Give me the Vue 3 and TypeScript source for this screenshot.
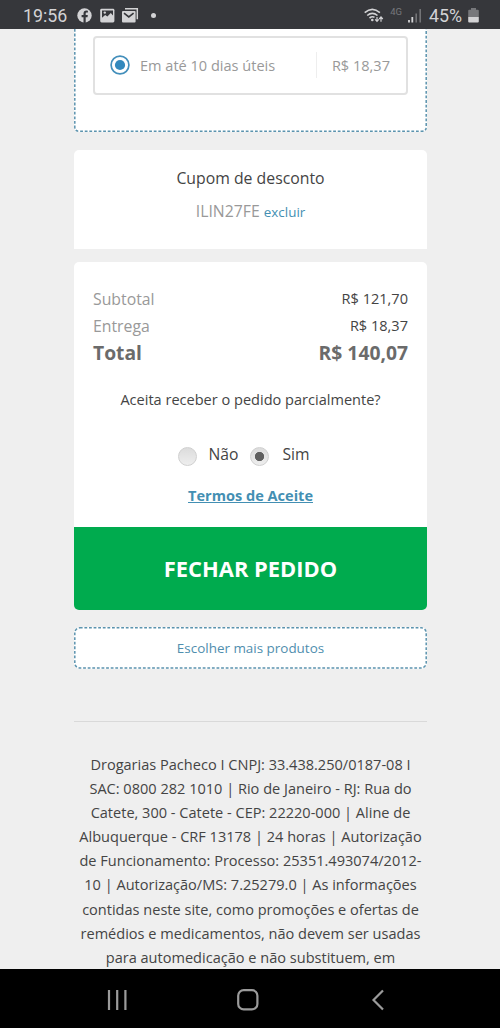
<script setup lang="ts">
interface Row { label: string; value: string; total?: boolean }

const rows: Row[] = [
  { label: 'Subtotal', value: 'R$ 121,70' },
  { label: 'Entrega', value: 'R$ 18,37' },
  { label: 'Total', value: 'R$ 140,07', total: true },
]

const legal: string[] = [
  'Drogarias Pacheco I CNPJ: 33.438.250/0187-08 I',
  'SAC: 0800 282 1010 | Rio de Janeiro - RJ: Rua do',
  'Catete, 300 - Catete - CEP: 22220-000 | Aline de',
  'Albuquerque - CRF 13178 | 24 horas | Autorização',
  'de Funcionamento: Processo: 25351.493074/2012-',
  '10 | Autorização/MS: 7.25279.0 | As informações',
  'contidas neste site, como promoções e ofertas de',
  'remédios e medicamentos, não devem ser usadas',
  'para automedicação e não substituem, em',
]
</script>

<template>
  <div class="phone">
    <header class="status">
      <span class="clock">19:56</span>
      <svg class="fb" width="15" height="15" viewBox="0 0 15 15">
        <circle cx="7.5" cy="7.5" r="7.2" fill="#d3d3d5" />
        <path d="M6.5 15V9.3H4.6V7.1h1.9V5.6c0-2 1.1-3 2.9-3l1.5.1v1.9H9.8c-.8 0-1.1.4-1.1 1v1.5h2.1l-.3 2.2H8.7V15z" fill="#36373b" />
      </svg>
      <svg class="photo" width="15" height="15" viewBox="0 0 15 15">
        <rect x="0.2" y="0.8" width="14.2" height="13.6" rx="1.4" fill="#d3d3d5" />
        <path d="M2 2.6v7.2l3.2-2.9 2.2 1.6 3.4-3.6L13 7.6V2.6z" fill="#36373b" />
        <circle cx="4.8" cy="4.6" r="1.2" fill="#d3d3d5" />
      </svg>
      <svg class="mail" width="17" height="15" viewBox="0 0 17 15">
        <path d="M3 0.8h12.3v10.5" fill="none" stroke="#d3d3d5" stroke-width="1.5" />
        <rect x="0" y="3" width="13.6" height="11.4" rx="1" fill="#d3d3d5" />
        <path d="M2 5.2l4.8 3.8 4.8-3.8" fill="none" stroke="#36373b" stroke-width="1.6" />
      </svg>
      <i class="dot"></i>
      <span class="spacer"></span>
      <svg class="wifi" width="20" height="15" viewBox="0 0 20 15">
        <g fill="none" stroke="#d3d3d5" stroke-width="1.6">
          <path d="M0.7 4.6Q8.3 -2 15.9 4.6" />
          <path d="M3.2 7.5Q8.3 3.2 13.5 7.5" />
          <path d="M5.5 10Q8.3 7.8 10.5 9.3" />
        </g>
        <circle cx="8.3" cy="12" r="1.3" fill="#d3d3d5" />
        <path d="M13 9v4M11.2 11.3l1.8 2 1.8-2M17 13.7v-4M15.2 11l1.8-2 1.8 2" fill="none" stroke="#d3d3d5" stroke-width="1.2" />
      </svg>
      <span class="net">4G</span>
      <svg class="signal" width="14" height="14" viewBox="0 0 14 14">
        <path d="M1 11v2.4M4.3 8v5.4" stroke="#d3d3d5" stroke-width="1.8" />
        <path d="M8.2 4.5v8.9M12.2 0v13.4" stroke="#77787b" stroke-width="1.5" />
      </svg>
      <span class="pct">45%</span>
      <svg class="battery" width="11" height="15" viewBox="0 0 11 15">
        <path d="M3 0h5v1.7h1.8q1 0 1 1V9H.2V2.7q0-1 1-1H3z" fill="#77787b" />
        <path d="M.2 9h10.6v4.5q0 1-1 1H1.2q-1 0-1-1z" fill="#d3d3d5" />
      </svg>
    </header>

    <main class="page">
      <section class="shipping">
        <svg class="outline" width="353" height="104" viewBox="0 0 353 104">
          <path d="M.8 0V98Q.8 102.2 5 102.2H348Q352.2 102.2 352.2 98V0" />
        </svg>
        <div class="option">
          <svg width="20" height="20" viewBox="0 0 20 20">
            <circle cx="10" cy="10" r="8.9" fill="#fff" stroke="#438fbb" stroke-width="1.7" />
            <circle cx="10" cy="10" r="5.1" fill="#3389bd" />
          </svg>
          <span class="days">Em até 10 dias úteis</span>
          <span class="price">R$ 18,37</span>
        </div>
      </section>

      <section class="coupon">
        <h2>Cupom de desconto</h2>
        <p><span class="code">ILIN27FE</span> <a>excluir</a></p>
      </section>

      <section class="summary">
        <div v-for="r in rows" :key="r.label" class="row" :class="{ total: r.total }">
          <span>{{ r.label }}</span><span class="value">{{ r.value }}</span>
        </div>
        <p class="question">Aceita receber o pedido parcialmente?</p>
        <div class="choices">
          <i class="radio"></i><span class="no">Não</span>
          <i class="radio on"></i><span class="yes">Sim</span>
        </div>
        <a class="terms">Termos de Aceite</a>
      </section>
      <button class="close">FECHAR PEDIDO</button>

      <button class="more">
        <svg class="outline" width="353" height="42" viewBox="0 0 353 42">
          <rect x=".8" y=".8" width="351.4" height="40.2" rx="5" />
        </svg>
        <span>Escolher mais produtos</span>
      </button>

      <footer class="legal">
        <div v-for="line in legal" :key="line">{{ line }}</div>
      </footer>
    </main>

    <nav class="nav">
      <svg width="22" height="22" viewBox="0 0 22 22"><path d="M2 1v20M10.2 1v20M18.4 1v20" /></svg>
      <svg width="24" height="24" viewBox="0 0 24 24"><rect x="2.2" y="2.2" width="19.2" height="19.2" rx="5.5" /></svg>
      <svg width="14" height="22" viewBox="0 0 14 22"><path d="M12 1.5L2.5 11L12 20.5" /></svg>
    </nav>
  </div>
</template>

<style>
body { margin: 0; background: #efefef; }
</style>

<style scoped>
.phone { width: 500px; height: 1028px; display: flex; flex-direction: column; overflow: hidden; background: #efefef; font-family: "Open Sans", "Noto Sans", sans-serif; color: #444; }
.status { height: 29px; flex: none; background: #36373b; color: #d3d3d5; display: flex; align-items: center; font-family: Roboto, sans-serif; font-size: 17.8px; box-sizing: border-box; padding: 2px 21px 0 23px; line-height: 27px; }
.clock { width: 53.5px; }
.photo { margin-left: 8px; }
.mail { margin-left: 7px; }
.dot { width: 5px; height: 5px; border-radius: 50%; background: #d3d3d5; margin-left: 12px; }
.spacer { flex: 1; }
.net { font-size: 9.5px; color: #77787b; margin: -8px 6px 0 6px; line-height: 12px; }
.pct { margin: 0 6px 0 7px; }
.page { height: 940px; flex: none; width: 353px; margin: 0 auto 0 74px; overflow: hidden; display: flex; flex-direction: column; }
.outline { position: absolute; left: 0; top: 0; }
.outline path, .outline rect { fill: none; stroke: #5b93ae; stroke-width: 1.5; stroke-dasharray: 2.8 1.8; }
.shipping { position: relative; height: 103px; flex: none; background: #fff; border-radius: 0 0 5px 5px; box-sizing: border-box; padding: 7px 19px 0; }
.option { height: 59px; box-sizing: border-box; border: 2px solid #e1e1e1; border-radius: 4px; display: flex; align-items: center; padding: 0 16px 0 15px; font-size: 14.55px; color: #999; }
.option > svg { margin-top: -1px; }
.option > span { margin-top: -2px; }
.days { margin-left: 10px; flex: 1; }
.price { border-left: 1px solid #eee; padding-left: 15px; line-height: 26px; }
.coupon { height: 99px; flex: none; margin-top: 18px; background: #fff; border-radius: 5px 5px 0 0; text-align: center; }
h2 { margin: 16px 0 0; font-size: 15.8px; line-height: 24px; font-weight: 400; }
.coupon p { margin: 9px 0 0; line-height: 24px; font-size: 15.8px; color: #999; }
a { color: #438fb3; }
.coupon a { font-size: 13.4px; }
.summary { height: 265px; flex: none; box-sizing: border-box; margin-top: 13px; padding: 23px 19px 0; background: #fff; border-radius: 5px 5px 0 0; display: flex; flex-direction: column; }
.row { display: flex; justify-content: space-between; align-items: center; height: 27px; font-size: 15.8px; color: #999; }
.value { font-size: 14.55px; color: #444; margin-top: -2px; }
.total, .total .value { font-size: 19.3px; font-weight: 700; color: #6b6b6b; margin-top: 0; }
.question { margin: 21px 0 0; font-size: 14.55px; line-height: 24px; text-align: center; }
.choices { display: flex; align-items: center; margin: 31px 0 0 84.5px; height: 24px; font-size: 15.7px; }
.radio { width: 19px; height: 19px; flex: none; box-sizing: border-box; border: 1px solid #d0d0d0; border-radius: 50%; background: linear-gradient(#dcdcdc, #eee); margin-top: 4px; }
.radio.on { background: radial-gradient(circle, #606060 0 4.3px, transparent 5px), linear-gradient(#dcdcdc, #eee); }
.no { margin: 0 12px; }
.yes { margin-left: 13px; }
.terms { align-self: center; margin-top: 17px; font-size: 14.55px; line-height: 24px; font-weight: 700; text-decoration: underline; }
button { border: 0; padding: 0; font-family: inherit; flex: none; }
.close { height: 83px; background: #00ab4e; color: #fff; font-size: 21.9px; font-weight: 700; border-radius: 0 0 5px 5px; }
.more { position: relative; height: 42px; margin-top: 17px; background: #fff; border-radius: 6px; color: #4f8eae; font-size: 13.45px; }
.legal { margin-top: 52px; border-top: 1px solid #d9d9d9; padding-top: 30px; font-size: 14.55px; line-height: 24.1px; text-align: center; white-space: nowrap; }
.nav { height: 59px; flex: none; background: #000; display: flex; align-items: center; padding: 3px 115px 0 107px; justify-content: space-between; box-sizing: border-box; }
.nav svg:nth-child(2) { margin-left: -5px; }
.nav path, .nav rect { fill: none; stroke: #9b9b9b; stroke-width: 2.2; }
</style>
